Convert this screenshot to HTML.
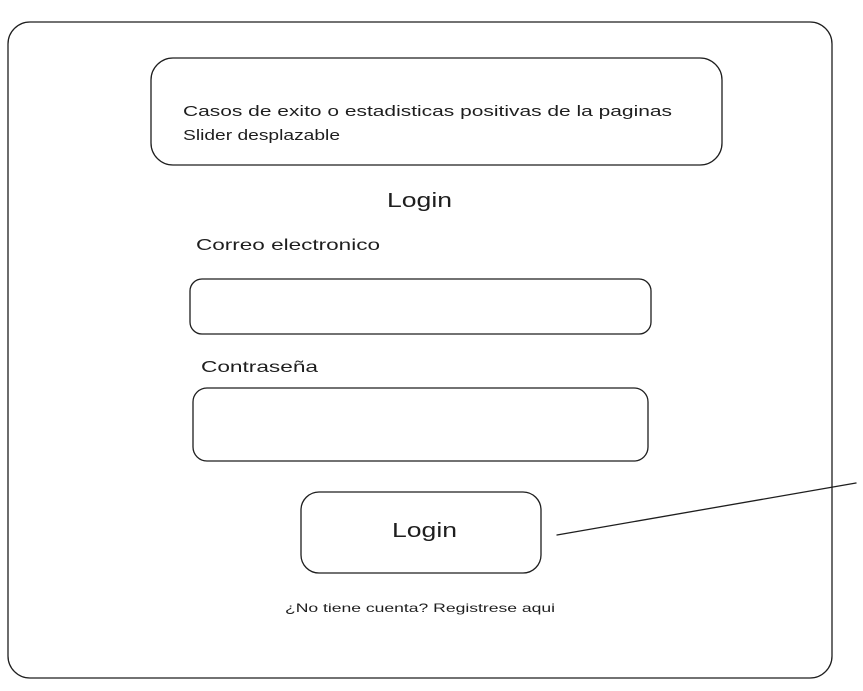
<!DOCTYPE html>
<html><head><meta charset="utf-8"><style>
html,body{margin:0;padding:0;background:#fff;width:863px;height:691px;overflow:hidden}
svg{display:block}
text{font-family:"Liberation Sans",sans-serif;fill:#1e1e1e}
</style></head><body>
<svg width="863" height="691" viewBox="0 0 863 691" xmlns="http://www.w3.org/2000/svg">
<g fill="none" stroke="#1e1e1e" stroke-width="1.3" stroke-linecap="round">
<rect x="8" y="22" width="824" height="656" rx="22"/>
<rect x="151" y="58" width="571" height="107" rx="22"/>
<rect x="190" y="279" width="461" height="55" rx="12"/>
<rect x="193" y="388" width="455" height="73" rx="14"/>
<rect x="301" y="492" width="240" height="81" rx="18"/>
<path d="M557 535 L856 483"/>
</g>
<text x="183" y="116" font-size="15" textLength="489" lengthAdjust="spacingAndGlyphs">Casos de exito o estadisticas positivas de la paginas</text>
<text x="183" y="140" font-size="15" textLength="157" lengthAdjust="spacingAndGlyphs">Slider desplazable</text>
<text x="387" y="207" font-size="20" textLength="65" lengthAdjust="spacingAndGlyphs">Login</text>
<text x="196" y="250" font-size="16" textLength="184" lengthAdjust="spacingAndGlyphs">Correo electronico</text>
<text x="201" y="372" font-size="16" textLength="117" lengthAdjust="spacingAndGlyphs">Contraseña</text>
<text x="392" y="537" font-size="20" textLength="65" lengthAdjust="spacingAndGlyphs">Login</text>
<text x="285" y="612" font-size="12" textLength="270" lengthAdjust="spacingAndGlyphs">¿No tiene cuenta? Registrese aqui</text>
</svg>
</body></html>
